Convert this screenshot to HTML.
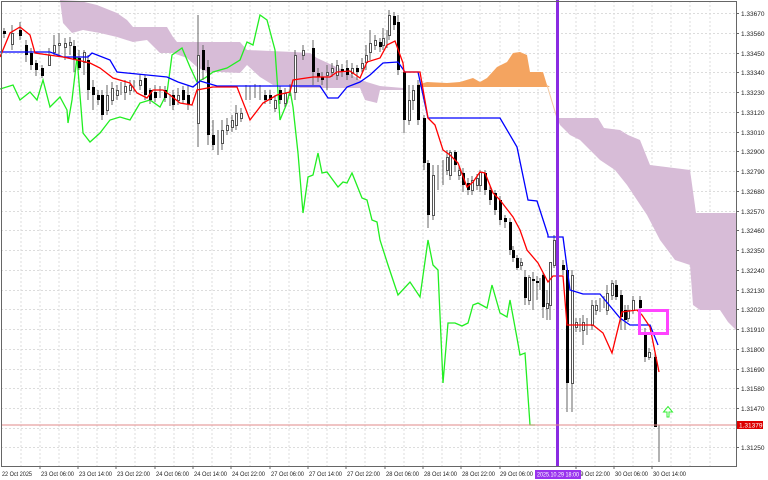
<!DOCTYPE html>
<html><head><meta charset="utf-8"><style>
html,body{margin:0;padding:0;background:#fff;width:768px;height:480px;overflow:hidden}
svg{display:block;font-family:"Liberation Sans",sans-serif}
</style></head><body>
<svg width="768" height="480" viewBox="0 0 768 480" xmlns="http://www.w3.org/2000/svg">
<rect width="768" height="480" fill="#fff"/>
<g stroke="#dcdcdc" stroke-width="1" stroke-dasharray="2,2">
<path d="M21 1V466M40 1V466M59 1V466M78 1V466M97 1V466M116 1V466M135 1V466M155 1V466M174 1V466M193 1V466M212 1V466M231 1V466M250 1V466M270 1V466M289 1V466M308 1V466M327 1V466M346 1V466M365 1V466M385 1V466M404 1V466M423 1V466M442 1V466M461 1V466M480 1V466M500 1V466M519 1V466M538 1V466M576 1V466M595 1V466M614 1V466M633 1V466M652 1V466M671 1V466M690 1V466M710 1V466"/>
<path d="M1 13.5H736M1 33.5H736M1 53.5H736M1 72.5H736M1 92.5H736M1 112.5H736M1 132.5H736M1 151.5H736M1 171.5H736M1 191.5H736M1 211.5H736M1 230.5H736M1 250.5H736M1 270.5H736M1 290.5H736M1 309.5H736M1 329.5H736M1 349.5H736M1 369.5H736M1 388.5H736M1 408.5H736M1 428.5H736M1 447.5H736"/>
</g>
<polygon fill="#d7bcd7" points="60,0 80,1 97,5 117,13 127,20 133,27 167,27 173,37 177,42 240,42 247,50 293,52 310,53 317,58 347,72 360,80 380,86 403,88 403,90 380,90 377,103 365,100 360,88 300,88 290,85 273,85 260,77 247,65 240,73 220,72 207,72 197,67 187,58 173,53 160,53 147,40 133,42 117,37 100,33 83,30 72,33 63,23"/>
<polygon fill="#f4a460" points="417,85 427,82 447,83 460,82 473,78 480,82 487,78 497,67 507,62 513,53 520,52 527,55 530,72 543,72 547,85 550,87 417,87"/>
<polyline fill="none" stroke="#f4c8a0" stroke-width="1" points="547,85 553,105 557,118"/>
<polygon fill="#d7bcd7" points="557,118 598,118 604,128 620,130 628,135 640,140 650,165 690,170 696,213 736,213 736,330 728,322 720,310 700,310 693,305 690,265 675,260 660,240 647,215 637,200 627,185 615,170 600,160 590,150 580,140 570,135 560,125"/>
<polyline fill="none" stroke="#22ee22" stroke-width="1.3" points="0,89 13,85 20,100 30,92 37,100 43,80 50,107 60,97 67,110 68,123 72,100 77,57 83,133 90,142 100,133 110,120 120,117 130,120 140,103 150,100 160,107 167,93 172,55 182,48 190,67 197,82 205,78 213,72 227,68 240,60 247,42 253,45 260,15 267,20 275,50 280,120 287,103 290,90 293,107 298,153 303,213 308,177 313,175 318,153 322,173 327,172 338,187 343,182 347,183 352,173 362,198 367,200 372,220 377,222 380,240 388,265 398,295 410,282 420,297 428,240 433,265 438,270 443,383 448,323 455,323 462,326 468,323 473,305 478,303 487,308 492,285 500,313 507,317 510,300 517,338 520,355 525,353 530,425 535,425"/>
<path stroke="#666" stroke-width="1" fill="none" d="M4 28V38M12 25V50M20 22V40M26 40V62M31 48V70M36 60V76M42 65V78M49 48V66M54 35V55M59 33V57M65 38V60M70 37V55M74 40V72M79 50V70M84 50V75M88 55V100M93 80V110M98 90V105M102 90V120M107 85V115M112 82V105M117 85V100M121 82V95M125 80V100M130 80V95M134 80V92M140 75V90M145 75V100M150 88V104M155 85V102M160 86V98M165 86V102M170 94V106M173 90V110M178 88V105M183 86V104M188 85V110M198 15V147M203 45V80M208 60V145M213 120V150M218 130V155M222 120V150M227 118V135M232 115V132M236 105V130M241 108V122M246 85V100M250 86V100M255 84V98M260 85V100M265 90V104M270 90V104M275 95V112M280 86V104M285 88V107M290 84V96M295 50V100M303 45V60M313 40V85M318 68V82M322 72V85M327 65V90M332 63V77M337 60V80M342 64V77M347 60V80M352 63V78M357 65V80M362 58V72M366 45V70M370 30V60M375 35V50M380 38V52M383 28V50M387 30V48M389 10V40M394 12V30M398 15V75M404 70V133M409 85V125M413 85V110M418 80V125M424 115V170M428 160V228M433 165V220M438 165V190M443 160V185M447 150V175M450 150V180M455 150V172M459 165V180M463 168V192M468 178V195M472 176V195M477 174V190M480 170V192M485 170V195M490 186V205M495 190V215M500 196V225M505 215V228M510 218V255M513 246V262M517 255V270M521 258V270M525 270V305M529 275V305M533 272V310M537 276V300M540 278V290M543 272V318M547 290V320M550 262V320M554 235V268M563 260V275M567 265V412M572 270V412M576 318V332M580 318V332M583 315V345M587 318V335M592 300V330M596 300V315M600 298V312M604 296V308M607 285V315M612 280V300M616 280V300M621 290V330M625 305V330M628 305V322M633 296V314M640 296V312M645 328V362M649 348V360M655 352V427M659 425V462"/>
<g fill="#000">
<rect x="3" y="31" width="3" height="3"/><rect x="19" y="30" width="3" height="6"/><rect x="25" y="45" width="3" height="10"/><rect x="30" y="53" width="3" height="12"/><rect x="35" y="63" width="3" height="7"/><rect x="41" y="68" width="3" height="8"/><rect x="73" y="46" width="3" height="14"/><rect x="78" y="58" width="3" height="10"/><rect x="87" y="60" width="3" height="30"/><rect x="92" y="87" width="3" height="8"/><rect x="97" y="95" width="3" height="5"/><rect x="101" y="95" width="3" height="20"/><rect x="144" y="78" width="3" height="17"/><rect x="149" y="90" width="3" height="10"/><rect x="154" y="92" width="3" height="6"/><rect x="164" y="90" width="3" height="8"/><rect x="172" y="95" width="3" height="10"/><rect x="182" y="90" width="3" height="10"/><rect x="187" y="95" width="3" height="9"/><rect x="202" y="50" width="3" height="20"/><rect x="207" y="67" width="3" height="68"/><rect x="212" y="135" width="3" height="10"/><rect x="264" y="95" width="3" height="5"/><rect x="269" y="95" width="3" height="5"/><rect x="279" y="90" width="3" height="10"/><rect x="312" y="48" width="3" height="24"/><rect x="317" y="73" width="3" height="4"/><rect x="321" y="77" width="3" height="3"/><rect x="341" y="69" width="3" height="3"/><rect x="346" y="68" width="3" height="7"/><rect x="356" y="68" width="3" height="4"/><rect x="379" y="42" width="3" height="5"/><rect x="393" y="16" width="3" height="9"/><rect x="397" y="22" width="3" height="48"/><rect x="403" y="72" width="3" height="48"/><rect x="417" y="85" width="3" height="35"/><rect x="423" y="118" width="3" height="45"/><rect x="427" y="163" width="3" height="52"/><rect x="454" y="152" width="3" height="13"/><rect x="462" y="173" width="3" height="12"/><rect x="467" y="183" width="3" height="7"/><rect x="484" y="173" width="3" height="17"/><rect x="489" y="190" width="3" height="10"/><rect x="494" y="193" width="3" height="17"/><rect x="499" y="200" width="3" height="20"/><rect x="504" y="218" width="3" height="4"/><rect x="509" y="222" width="3" height="28"/><rect x="512" y="250" width="3" height="8"/><rect x="516" y="258" width="3" height="10"/><rect x="524" y="277" width="3" height="21"/><rect x="532" y="279" width="3" height="2"/><rect x="536" y="281" width="3" height="2"/><rect x="542" y="275" width="3" height="32"/><rect x="562" y="265" width="3" height="5"/><rect x="566" y="270" width="3" height="113"/><rect x="615" y="285" width="3" height="12"/><rect x="620" y="295" width="3" height="22"/><rect x="624" y="310" width="3" height="10"/><rect x="639" y="300" width="3" height="8"/><rect x="644" y="333" width="3" height="24"/><rect x="654" y="357" width="3" height="70"/>
</g>
<g fill="#fff" stroke="#555" stroke-width="1">
<rect x="11.5" y="33.5" width="2" height="11"/><rect x="48.5" y="55.5" width="2" height="10"/><rect x="53.5" y="45.5" width="2" height="7"/><rect x="58.5" y="43.5" width="2" height="2"/><rect x="64.5" y="43.5" width="2" height="4"/><rect x="69.5" y="42.5" width="2" height="3"/><rect x="83.5" y="52.5" width="2" height="10"/><rect x="106.5" y="95.5" width="2" height="15"/><rect x="111.5" y="88.5" width="2" height="12"/><rect x="116.5" y="90.5" width="2" height="5"/><rect x="124.5" y="86.5" width="2" height="6"/><rect x="129.5" y="85.5" width="2" height="5"/><rect x="139.5" y="80.5" width="2" height="5"/><rect x="177.5" y="95.5" width="2" height="5"/><rect x="197.5" y="55.5" width="2" height="68"/><rect x="221.5" y="130.5" width="2" height="13"/><rect x="226.5" y="125.5" width="2" height="5"/><rect x="231.5" y="120.5" width="2" height="7"/><rect x="235.5" y="113.5" width="2" height="12"/><rect x="240.5" y="113.5" width="2" height="5"/><rect x="274.5" y="100.5" width="2" height="8"/><rect x="284.5" y="93.5" width="2" height="10"/><rect x="294.5" y="55.5" width="2" height="37"/><rect x="302.5" y="50.5" width="2" height="5"/><rect x="326.5" y="72.5" width="2" height="3"/><rect x="331.5" y="68.5" width="2" height="4"/><rect x="336.5" y="65.5" width="2" height="10"/><rect x="351.5" y="68.5" width="2" height="5"/><rect x="361.5" y="63.5" width="2" height="5"/><rect x="365.5" y="55.5" width="2" height="7"/><rect x="369.5" y="43.5" width="2" height="9"/><rect x="374.5" y="40.5" width="2" height="5"/><rect x="382.5" y="38.5" width="2" height="7"/><rect x="388.5" y="15.5" width="2" height="20"/><rect x="408.5" y="100.5" width="2" height="20"/><rect x="412.5" y="90.5" width="2" height="10"/><rect x="432.5" y="175.5" width="2" height="40"/><rect x="446.5" y="157.5" width="2" height="13"/><rect x="449.5" y="152.5" width="2" height="23"/><rect x="458.5" y="170.5" width="2" height="5"/><rect x="471.5" y="180.5" width="2" height="10"/><rect x="476.5" y="178.5" width="2" height="7"/><rect x="479.5" y="172.5" width="2" height="13"/><rect x="520.5" y="262.5" width="2" height="3"/><rect x="528.5" y="277.5" width="2" height="23"/><rect x="546.5" y="303.5" width="2" height="5"/><rect x="549.5" y="262.5" width="2" height="43"/><rect x="553.5" y="240.5" width="2" height="25"/><rect x="571.5" y="275.5" width="2" height="108"/><rect x="575.5" y="322.5" width="2" height="5"/><rect x="582.5" y="322.5" width="2" height="8"/><rect x="591.5" y="305.5" width="2" height="20"/><rect x="595.5" y="305.5" width="2" height="5"/><rect x="606.5" y="293.5" width="2" height="17"/><rect x="611.5" y="283.5" width="2" height="12"/><rect x="627.5" y="310.5" width="2" height="8"/><rect x="632.5" y="300.5" width="2" height="10"/><rect x="648.5" y="352.5" width="2" height="5"/>
</g>
<polyline fill="none" stroke="#0000ff" stroke-width="1.3" points="0,52 50,52 63,57 88,57 92,53 110,60 117,72 167,77 178,82 193,87 200,81 217,86 300,86 320,86 328,98 338,98 347,87 360,82 370,75 383,63 398,62 405,72 418,72 428,118 500,118 517,147 528,200 537,201 548,235 548,237 563,237 570,290 583,294 600,294 620,318 630,325 650,325 658,345"/>
<polyline fill="none" stroke="#ff0000" stroke-width="1.3" points="0,57 10,33 20,27 30,35 35,53 63,57 77,60 90,63 100,68 113,78 130,83 137,93 147,98 153,90 163,90 170,95 180,103 192,105 197,90 213,87 237,87 250,120 263,103 277,95 290,92 293,80 313,77 330,77 337,72 350,71 360,78 367,62 380,58 387,45 395,41 403,63 404,72 420,72 428,118 435,125 443,150 450,155 458,163 467,187 473,182 480,172 485,173 493,193 500,200 513,217 520,230 527,250 538,263 548,282 553,276 563,276 567,325 593,325 603,333 612,353 622,312 637,310 642,315 650,327 655,352 659,372"/>
<rect x="556" y="0" width="3" height="466" fill="#8a2be2"/>
<rect x="1" y="424.5" width="735" height="1" fill="#e08888"/>
<rect x="639.5" y="310.5" width="28" height="23" fill="none" stroke="#ff44ff" stroke-width="3"/>
<path d="M667 417V412H663.5L668 406.5L672.5 412H669V417Z" fill="#fff" stroke="#33ee33" stroke-width="1"/>
<path d="M1.5 466V1.5H736.5V466.5H1" fill="none" stroke="#666" stroke-width="1"/>
<g stroke="#666"><path d="M736 13.5h3M736 33.5h3M736 53.5h3M736 72.5h3M736 92.5h3M736 112.5h3M736 132.5h3M736 151.5h3M736 171.5h3M736 191.5h3M736 211.5h3M736 230.5h3M736 250.5h3M736 270.5h3M736 290.5h3M736 309.5h3M736 329.5h3M736 349.5h3M736 369.5h3M736 388.5h3M736 408.5h3M736 447.5h3"/></g>
<g font-size="6.5" fill="#222">
<text x="741" y="16">1.33670</text><text x="741" y="36">1.33560</text><text x="741" y="56">1.33450</text><text x="741" y="75">1.33340</text><text x="741" y="95">1.33230</text><text x="741" y="115">1.33120</text><text x="741" y="135">1.33010</text><text x="741" y="154">1.32900</text><text x="741" y="174">1.32790</text><text x="741" y="194">1.32680</text><text x="741" y="214">1.32570</text><text x="741" y="233">1.32460</text><text x="741" y="253">1.32350</text><text x="741" y="273">1.32240</text><text x="741" y="293">1.32130</text><text x="741" y="312">1.32020</text><text x="741" y="332">1.31910</text><text x="741" y="352">1.31800</text><text x="741" y="372">1.31690</text><text x="741" y="391">1.31580</text><text x="741" y="411">1.31470</text><text x="741" y="450">1.31250</text>
</g>
<rect x="737" y="421" width="26" height="8" fill="#dd0000"/>
<text x="739" y="427.5" font-size="6.5" fill="#fff">1.31379</text>
<g stroke="#666"><path d="M40 466v3M78 466v3M116 466v3M155 466v3M193 466v3M231 466v3M270 466v3M308 466v3M346 466v3M385 466v3M423 466v3M461 466v3M500 466v3M576 466v3M614 466v3M652 466v3"/></g>
<g font-size="6" fill="#222" lengthAdjust="spacingAndGlyphs">
<text x="2" y="476" textLength="30" lengthAdjust="spacingAndGlyphs">22 Oct 2025</text><text x="41" y="476" textLength="33" lengthAdjust="spacingAndGlyphs">23 Oct 06:00</text><text x="79" y="476" textLength="33" lengthAdjust="spacingAndGlyphs">23 Oct 14:00</text><text x="117" y="476" textLength="33" lengthAdjust="spacingAndGlyphs">23 Oct 22:00</text><text x="156" y="476" textLength="33" lengthAdjust="spacingAndGlyphs">24 Oct 06:00</text><text x="194" y="476" textLength="33" lengthAdjust="spacingAndGlyphs">24 Oct 14:00</text><text x="232" y="476" textLength="33" lengthAdjust="spacingAndGlyphs">24 Oct 22:00</text><text x="271" y="476" textLength="33" lengthAdjust="spacingAndGlyphs">27 Oct 06:00</text><text x="309" y="476" textLength="33" lengthAdjust="spacingAndGlyphs">27 Oct 14:00</text><text x="347" y="476" textLength="33" lengthAdjust="spacingAndGlyphs">27 Oct 22:00</text><text x="386" y="476" textLength="33" lengthAdjust="spacingAndGlyphs">28 Oct 06:00</text><text x="424" y="476" textLength="33" lengthAdjust="spacingAndGlyphs">28 Oct 14:00</text><text x="462" y="476" textLength="33" lengthAdjust="spacingAndGlyphs">28 Oct 22:00</text><text x="500" y="476" textLength="33" lengthAdjust="spacingAndGlyphs">29 Oct 06:00</text><text x="577" y="476" textLength="33" lengthAdjust="spacingAndGlyphs">29 Oct 22:00</text><text x="615" y="476" textLength="33" lengthAdjust="spacingAndGlyphs">30 Oct 06:00</text><text x="653" y="476" textLength="33" lengthAdjust="spacingAndGlyphs">30 Oct 14:00</text>
</g>
<rect x="535" y="470" width="46" height="9" fill="#9933ee"/>
<text x="537" y="476.5" font-size="6" fill="#fff" textLength="42" lengthAdjust="spacingAndGlyphs">2025.10.29 18:00</text>
</svg>
</body></html>
